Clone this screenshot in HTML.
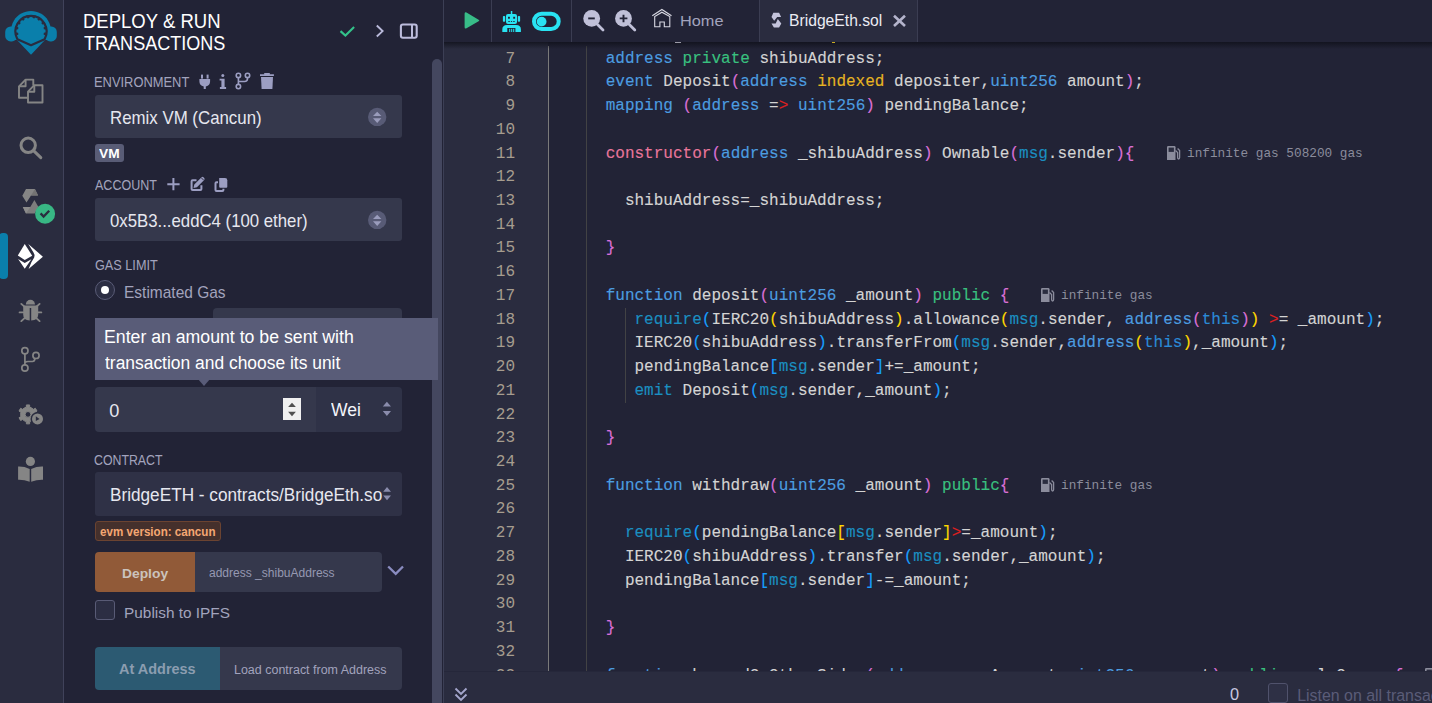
<!DOCTYPE html>
<html><head><meta charset="utf-8">
<style>
*{box-sizing:border-box;margin:0;padding:0}
html,body{width:1432px;height:703px;overflow:hidden;background:#222336;font-family:"Liberation Sans",sans-serif}
.a{position:absolute}
#icons{left:0;top:0;width:64px;height:703px;background:#2a2c3f;border-right:1px solid #40425a}
#side{left:64px;top:0;width:380px;height:703px;background:#222336;border-right:1px solid #3c3f55}
.lbl{position:absolute;left:95px;font-size:12.8px;color:#a2a3bd;white-space:nowrap;line-height:15px}
.sel{position:absolute;left:95px;width:307px;height:43px;background:#35384c;border-radius:3px;color:#dfe0ea;font-size:16.8px;white-space:nowrap;overflow:hidden}
.sel span{position:absolute;left:16px;top:12px;line-height:19px}
.udc{position:absolute;width:19px;height:19px;border-radius:50%;background:#575a73}
#toolbar{left:444px;top:0;width:988px;height:42px;background:#222336;}
#gutter{left:444px;top:42px;width:104px;height:629px;background:#2a2c3f}
.ln{position:absolute;width:71px;text-align:right;font-family:"Liberation Mono",monospace;font-size:16px;color:#a69d8f;white-space:pre;line-height:23.73px;height:23.73px}
.cl{position:absolute;font-family:"Liberation Mono",monospace;font-size:16.03px;color:#d4d4d4;white-space:pre;-webkit-text-stroke:0.12px currentColor;line-height:23.73px;height:23.73px}
.k{color:#4c9de0}.th{color:#2b8ad6}.g{color:#39c07f}.y{color:#e6b422}.p{color:#e9769b}.t{color:#1b8fc1}
.b1{color:#da70d6}.b2{color:#ffd700}.b3{color:#179fff}.r{color:#e02020}
.gas{position:absolute;font-family:"Liberation Mono",monospace;font-size:12.74px;color:#8b8c9c;white-space:pre;line-height:16px}
#term{left:444px;top:671px;width:988px;height:32px;background:#2a2c3f;border-top:1px solid #25273a}
.guide{position:absolute;width:1px}
.sep{position:absolute;top:0;width:1px;height:42px;background:#3b3d52}

</style></head><body>
<div id="icons" class="a"></div>
<!-- left icon bar -->
<svg class="a" style="left:0;top:0" width="63" height="60" viewBox="0 0 63 60">
 <g fill="#0a7fab">
  <path d="M13.1 40A20 20 0 1 1 48.9 40Z"/>
  <rect x="5.2" y="26.4" width="12" height="15" rx="5.5"/>
  <rect x="44.8" y="26.4" width="12" height="15" rx="5.5"/>
  <path d="M17 40H45L31 54.8Z"/>
 </g>
 <path d="M17.4 39.2A15.6 15.6 0 1 1 44.6 39.2L31 45.2Z" fill="none" stroke="#2a2c3f" stroke-width="2.2" stroke-linejoin="round"/>
 <path d="M32.33 14.96L35.91 15.67L34.40 18.45L32.66 18.11ZM38.37 16.69L41.40 18.71L38.94 20.71L37.47 19.72ZM43.29 20.60L45.31 23.63L42.28 24.53L41.29 23.06ZM46.33 26.09L47.04 29.67L43.89 29.34L43.55 27.60ZM47.04 32.33L46.33 35.91L43.55 34.40L43.89 32.66ZM15.67 35.91L14.96 32.33L18.11 32.66L18.45 34.40ZM14.96 29.67L15.67 26.09L18.45 27.60L18.11 29.34ZM16.69 23.63L18.71 20.60L20.71 23.06L19.72 24.53ZM20.60 18.71L23.63 16.69L24.53 19.72L23.06 20.71ZM26.09 15.67L29.67 14.96L29.34 18.11L27.60 18.45Z" fill="#2a2c3f"/>
</svg>
<svg class="a" style="left:14px;top:74px" width="34" height="34" viewBox="0 0 34 34">
 <g fill="none" stroke="#858585" stroke-width="1.9" stroke-linejoin="round">
  <path d="M13.5 23.7H5V12.3L11.6 5.6H19.3V11.5"/><path d="M11.6 5.6V12.3H5"/>
  <path d="M14 17.7L20.3 11.2H28.5V28.5H14Z"/><path d="M20.3 11.2V17.7H14"/>
 </g>
</svg>
<svg class="a" style="left:14px;top:131px" width="34" height="32" viewBox="0 0 34 32">
 <g fill="none" stroke="#858585" stroke-width="3" stroke-linecap="round">
  <circle cx="14.2" cy="14.3" r="7.2"/><path d="M19.8 19.8L26.8 26.6"/>
 </g>
</svg>
<svg class="a" style="left:14px;top:183px" width="44" height="44" viewBox="14 183 44 44">
 <path d="M26 189.1L34.9 189.1L38.1 195.6L31 195.6L26.5 202.6L22.3 195.8Z" fill="#858585"/>
 <path d="M34.9 189.1L38.1 195.6L31 195.6Z" fill="#737373"/>
 <path d="M34.4 200L38.3 206.7L34.7 213.5L26 213.5L22.8 207L30.3 207Z" fill="#7d7d7d"/>
 <path d="M22.8 207L26 213.5L30.3 207Z" fill="#8c8c8c"/>
 <circle cx="45.1" cy="213.7" r="10" fill="#38b784"/>
 <path d="M40.6 213.4L43.6 216.6L49.2 210.8" fill="none" stroke="#2a2c3f" stroke-width="2.3"/>
</svg>
<div class="a" style="left:-1px;top:233px;width:9px;height:46px;background:#0a7fab;border-radius:4px"></div>
<svg class="a" style="left:14px;top:240px" width="34" height="34" viewBox="0 0 34 34">
 <path d="M10.75 3.9L18.2 15.7L10.75 20L3.8 15.4Z" fill="#fff"/>
 <path d="M4.1 19L10.75 23.1L17.4 19.2L10.75 28.7Z" fill="#fff"/>
 <path d="M14.3 4.1L28.9 16.7L14.6 29L17.5 22L20.2 17.5L20.6 15L19.5 12.5Z" fill="#fff"/>
</svg>
<svg class="a" style="left:14px;top:294px" width="34" height="34" viewBox="0 0 34 34">
 <g fill="#858585">
  <path d="M11.8 10.4A4.6 4.6 0 0 1 21 10.4Z"/>
  <path d="M9.2 11.6H24.2V20.5Q24.2 26.4 17.2 26.4H15.7Q9.2 26.4 9.2 20.5Z"/>
 </g>
 <path d="M16.45 14V27" stroke="#2a2c3f" stroke-width="1.5"/>
 <g stroke="#858585" stroke-width="1.9" stroke-linecap="round">
  <path d="M7.3 9.9L10.4 12.6M5.6 18.4H9.2M7.3 27.1L10.9 23.9M25.6 9.9L22.5 12.6M27.3 18.4H23.7M25.6 27.1L22 23.9"/>
 </g>
</svg>
<svg class="a" style="left:14px;top:340px" width="34" height="34" viewBox="0 0 34 34">
 <g fill="none" stroke="#858585" stroke-width="1.7">
  <circle cx="10.9" cy="10.7" r="3.1"/><circle cx="22" cy="15.4" r="3.1"/><circle cx="10.9" cy="28" r="3.1"/>
  <path d="M10.9 13.8V24.9M11 22.6Q12 21.5 14 21.5H18.5Q20.6 21.5 21 18.4"/>
 </g>
</svg>
<svg class="a" style="left:14px;top:396px" width="34" height="34" viewBox="0 0 34 34">
 <path fill="#858585" fill-rule="evenodd" stroke="#858585" stroke-width="1" stroke-linejoin="round" d="M10.30 11.99 L12.31 11.20 L12.40 8.93 L15.60 8.93 L15.69 11.20 L17.70 11.99 L19.39 13.33 L21.40 12.28 L23.00 15.05 L21.08 16.26 L21.40 18.40 L21.08 20.54 L23.00 21.75 L21.40 24.52 L19.39 23.47 L17.70 24.81 L15.69 25.60 L15.60 27.87 L12.40 27.87 L12.31 25.60 L10.30 24.81 L8.61 23.47 L6.60 24.52 L5.00 21.75 L6.92 20.54 L6.60 18.40 L6.92 16.26 L5.00 15.05 L6.60 12.28 L8.61 13.33Z M14 15.5A2.9 2.9 0 1 0 14 21.3A2.9 2.9 0 1 0 14 15.5Z"/>
 <circle cx="23.5" cy="22.9" r="7" fill="#2a2c3f"/>
 <circle cx="23.5" cy="22.9" r="5.5" fill="#858585"/>
 <path d="M21.8 20.2V24.9L25.6 22.9Z" fill="#2a2c3f"/>
</svg>
<svg class="a" style="left:14px;top:452px" width="34" height="34" viewBox="0 0 34 34">
 <g fill="#858585">
  <circle cx="16.4" cy="9.4" r="4.6"/>
  <path d="M4.1 14.5Q10 14.2 15.7 16.9V29.7Q10 27.6 4.1 27.8Z"/>
  <path d="M29 14.5Q23 14.2 17.2 16.9V29.7Q23 27.6 29 27.8Z"/>
 </g>
</svg>

<div id="side" class="a"></div>
<div id="toolbar" class="a">
  <div class="sep" style="left:47px"></div>
  <div class="sep" style="left:127px"></div>
</div>
<div id="gutter" class="a"></div>
<div class="guide" style="left:548px;top:46px;height:625px;background:#7a7a7a"></div>
<div class="guide" style="left:586px;top:46px;height:625px;background:#424244"></div>
<div class="guide" style="left:625px;top:308px;height:95px;background:#424244"></div>
<div class="a" style="left:444px;top:42px;width:988px;height:629px;overflow:hidden">
<div class="ln" style="left:0px;top:-18.15px">6</div>
<div class="ln" style="left:0px;top:5.58px">7</div>
<div class="cl" style="left:104px;top:5.58px">      <span class="k">address</span> <span class="g">private</span> shibuAddress;</div>
<div class="ln" style="left:0px;top:29.31px">8</div>
<div class="cl" style="left:104px;top:29.31px">      <span class="k">event</span> Deposit<span class="b1">(</span><span class="k">address</span> <span class="y">indexed</span> depositer,<span class="k">uint256</span> amount<span class="b1">)</span>;</div>
<div class="ln" style="left:0px;top:53.04px">9</div>
<div class="cl" style="left:104px;top:53.04px">      <span class="k">mapping</span> <span class="b1">(</span><span class="k">address</span> =<span class="r">&gt;</span> <span class="k">uint256</span><span class="b1">)</span> pendingBalance;</div>
<div class="ln" style="left:0px;top:76.77px">10</div>
<div class="ln" style="left:0px;top:100.50px">11</div>
<div class="cl" style="left:104px;top:100.50px">      <span class="p">constructor</span><span class="b1">(</span><span class="k">address</span> _shibuAddress<span class="b1">)</span> Ownable<span class="b1">(</span><span class="t">msg</span>.sender<span class="b1">)</span><span class="b1">{</span></div>
<svg class="a" style="left:722px;top:102.50109375px" width="15" height="16" viewBox="0 0 15 16"><path d="M1 2.2Q1 1 2.2 1H8.3Q9.5 1 9.5 2.2V15H1Z" fill="#8b8c9c"/><rect x="2.6" y="2.6" width="5.3" height="4.3" fill="#2b2d40"/><path d="M9.5 5.5L11.6 7.6V12.6Q11.6 14 12.6 14Q13.6 14 13.6 12.6V5.5L11.6 3.5" fill="none" stroke="#8b8c9c" stroke-width="1.3"/></svg>
<div class="gas" style="left:743px;top:104.00px">infinite gas 508200 gas</div>
<div class="ln" style="left:0px;top:124.23px">12</div>
<div class="ln" style="left:0px;top:147.96px">13</div>
<div class="cl" style="left:104px;top:147.96px">        shibuAddress=_shibuAddress;</div>
<div class="ln" style="left:0px;top:171.69px">14</div>
<div class="ln" style="left:0px;top:195.42px">15</div>
<div class="cl" style="left:104px;top:195.42px">      <span class="b1">}</span></div>
<div class="ln" style="left:0px;top:219.15px">16</div>
<div class="ln" style="left:0px;top:242.88px">17</div>
<div class="cl" style="left:104px;top:242.88px">      <span class="k">function</span> deposit<span class="b1">(</span><span class="k">uint256</span> _amount<span class="b1">)</span> <span class="g">public</span> <span class="b1">{</span></div>
<svg class="a" style="left:596px;top:244.88109375px" width="15" height="16" viewBox="0 0 15 16"><path d="M1 2.2Q1 1 2.2 1H8.3Q9.5 1 9.5 2.2V15H1Z" fill="#8b8c9c"/><rect x="2.6" y="2.6" width="5.3" height="4.3" fill="#2b2d40"/><path d="M9.5 5.5L11.6 7.6V12.6Q11.6 14 12.6 14Q13.6 14 13.6 12.6V5.5L11.6 3.5" fill="none" stroke="#8b8c9c" stroke-width="1.3"/></svg>
<div class="gas" style="left:617px;top:246.38px">infinite gas</div>
<div class="ln" style="left:0px;top:266.61px">18</div>
<div class="cl" style="left:104px;top:266.61px">         <span class="t">require</span><span class="b3">(</span>IERC20<span class="b2">(</span>shibuAddress<span class="b2">)</span>.allowance<span class="b2">(</span><span class="t">msg</span>.sender, <span class="k">address</span><span class="b1">(</span><span class="th">this</span><span class="b1">)</span><span class="b2">)</span> <span class="r">&gt;</span>= _amount<span class="b3">)</span>;</div>
<div class="ln" style="left:0px;top:290.34px">19</div>
<div class="cl" style="left:104px;top:290.34px">         IERC20<span class="b3">(</span>shibuAddress<span class="b3">)</span>.transferFrom<span class="b3">(</span><span class="t">msg</span>.sender,<span class="k">address</span><span class="b2">(</span><span class="th">this</span><span class="b2">)</span>,_amount<span class="b3">)</span>;</div>
<div class="ln" style="left:0px;top:314.07px">20</div>
<div class="cl" style="left:104px;top:314.07px">         pendingBalance<span class="b3">[</span><span class="t">msg</span>.sender<span class="b3">]</span>+=_amount;</div>
<div class="ln" style="left:0px;top:337.80px">21</div>
<div class="cl" style="left:104px;top:337.80px">         <span class="t">emit</span> Deposit<span class="b3">(</span><span class="t">msg</span>.sender,_amount<span class="b3">)</span>;</div>
<div class="ln" style="left:0px;top:361.53px">22</div>
<div class="ln" style="left:0px;top:385.26px">23</div>
<div class="cl" style="left:104px;top:385.26px">      <span class="b1">}</span></div>
<div class="ln" style="left:0px;top:408.99px">24</div>
<div class="ln" style="left:0px;top:432.72px">25</div>
<div class="cl" style="left:104px;top:432.72px">      <span class="k">function</span> withdraw<span class="b1">(</span><span class="k">uint256</span> _amount<span class="b1">)</span> <span class="g">public</span><span class="b1">{</span></div>
<svg class="a" style="left:596px;top:434.72109374999997px" width="15" height="16" viewBox="0 0 15 16"><path d="M1 2.2Q1 1 2.2 1H8.3Q9.5 1 9.5 2.2V15H1Z" fill="#8b8c9c"/><rect x="2.6" y="2.6" width="5.3" height="4.3" fill="#2b2d40"/><path d="M9.5 5.5L11.6 7.6V12.6Q11.6 14 12.6 14Q13.6 14 13.6 12.6V5.5L11.6 3.5" fill="none" stroke="#8b8c9c" stroke-width="1.3"/></svg>
<div class="gas" style="left:617px;top:436.22px">infinite gas</div>
<div class="ln" style="left:0px;top:456.45px">26</div>
<div class="ln" style="left:0px;top:480.18px">27</div>
<div class="cl" style="left:104px;top:480.18px">        <span class="t">require</span><span class="b3">(</span>pendingBalance<span class="b2">[</span><span class="t">msg</span>.sender<span class="b2">]</span><span class="r">&gt;</span>=_amount<span class="b3">)</span>;</div>
<div class="ln" style="left:0px;top:503.91px">28</div>
<div class="cl" style="left:104px;top:503.91px">        IERC20<span class="b3">(</span>shibuAddress<span class="b3">)</span>.transfer<span class="b3">(</span><span class="t">msg</span>.sender,_amount<span class="b3">)</span>;</div>
<div class="ln" style="left:0px;top:527.64px">29</div>
<div class="cl" style="left:104px;top:527.64px">        pendingBalance<span class="b3">[</span><span class="t">msg</span>.sender<span class="b3">]</span>-=_amount;</div>
<div class="ln" style="left:0px;top:551.37px">30</div>
<div class="ln" style="left:0px;top:575.10px">31</div>
<div class="cl" style="left:104px;top:575.10px">      <span class="b1">}</span></div>
<div class="ln" style="left:0px;top:598.83px">32</div>
<div class="ln" style="left:0px;top:622.56px">33</div>
<div class="cl" style="left:104px;top:622.56px">      <span class="k">function</span> burned2_OtherSides<span class="b1">(</span><span class="k">address</span> _newAccount,<span class="k">uint256</span> _amount<span class="b1">)</span> <span class="g">public</span> onlyOwner <span class="b1">{</span></div>
<svg class="a" style="left:980px;top:624.56109375px" width="15" height="16" viewBox="0 0 15 16"><path d="M1 2.2Q1 1 2.2 1H8.3Q9.5 1 9.5 2.2V15H1Z" fill="#8b8c9c"/><rect x="2.6" y="2.6" width="5.3" height="4.3" fill="#2b2d40"/><path d="M9.5 5.5L11.6 7.6V12.6Q11.6 14 12.6 14Q13.6 14 13.6 12.6V5.5L11.6 3.5" fill="none" stroke="#8b8c9c" stroke-width="1.3"/></svg>
<div class="gas" style="left:1001px;top:626.06px">infinite gas</div>
</div>
<div class="a" style="left:444px;top:42px;width:988px;height:7px;background:linear-gradient(rgba(14,15,24,0.75),rgba(14,15,24,0))"></div>
<div class="a" style="left:675px;top:42px;width:6px;height:1px;background:#9a9aa6"></div>
<div class="a" style="left:832px;top:42px;width:3px;height:1px;background:#c8a820"></div>
<div id="term" class="a"></div>

<!-- side panel -->
<div class="a" style="left:432px;top:59px;width:10px;height:660px;background:#44475f;border-radius:5px 5px 0 0"></div>
<svg class="a" style="left:330px;top:15px" width="100" height="35" viewBox="330 15 100 35">
 <path d="M340.5 31.1L345.4 35.5L354.1 26.9" fill="none" stroke="#33c28a" stroke-width="2.1"/>
 <path d="M376.8 25.5L382.6 31.1L376.8 36.5" fill="none" stroke="#b9b9da" stroke-width="1.9"/>
 <rect x="400.9" y="24.5" width="15.8" height="13.2" rx="2" fill="none" stroke="#bcbcdc" stroke-width="2.1"/>
 <path d="M412 24.5V37.7" stroke="#bcbcdc" stroke-width="2"/>
</svg>
<svg class="a" style="left:190px;top:70px" width="90" height="25" viewBox="190 70 90 25">
 <g fill="#9c9ec2">
  <rect x="201" y="74.6" width="2" height="4"/><rect x="206.6" y="74.6" width="2" height="4"/>
  <path d="M199.4 79H210.1V81.2Q210.1 85.5 205.8 86.4V89H203.7V86.4Q199.4 85.5 199.4 81.2Z"/>
  <circle cx="222.8" cy="75.4" r="1.5"/>
  <path d="M219.6 78.8H224.6V87H226.1V89H219.9V87H221.4V80.6H219.6Z"/>
  <path d="M260 74.3H264.2V73H269.8V74.3H273.9V76.1H260Z"/>
  <path d="M261 77H273L272.4 89H261.6Z"/>
 </g>
 <g fill="none" stroke="#9c9ec2" stroke-width="1.6">
  <circle cx="238.4" cy="75.4" r="2.2"/><circle cx="247.5" cy="75.4" r="2.2"/><circle cx="238.4" cy="86.6" r="2.2"/>
  <path d="M238.4 77.6V84.4M238.5 81.5H244.5Q247.5 81.5 247.5 78.5V77.6"/>
 </g>
</svg>
<div class="sel" style="top:95px"></div>
<svg class="a" style="left:366px;top:106px" width="22" height="22" viewBox="366 106 22 22">
 <circle cx="377.2" cy="116.9" r="9.2" fill="#585b76"/>
 <path d="M373 115.9H381.4L377.2 111.7Z M373 118.2H381.4L377.2 123Z" fill="#9a9cbc"/>
</svg>
<div class="a" style="left:95px;top:144px;width:29px;height:18px;background:#595c76;border-radius:3px"></div>
<svg class="a" style="left:160px;top:172px" width="75" height="25" viewBox="160 172 75 25">
 <path d="M167.3 184.3H179.6M173.4 178V190.3" stroke="#9c9ec2" stroke-width="2"/>
 <path d="M196.5 180.3H192.6Q191.6 180.3 191.6 181.3V189.1Q191.6 190.1 192.6 190.1H200.4Q201.4 190.1 201.4 189.1V185.3" fill="none" stroke="#9c9ec2" stroke-width="2"/>
 <path d="M193.5 187.9L194.3 184.6L201.6 177.3Q202.5 176.4 203.4 177.3L204.2 178.1Q205.1 179 204.2 179.9L196.9 187.2Z" fill="#9c9ec2"/>
 <path d="M201.2 177.7L203.8 180.3" stroke="#222336" stroke-width="0.9"/>
 <path d="M218 182.2H216.5Q215.5 182.2 215.5 183.2V189.9Q215.5 190.9 216.5 190.9H222.4Q223.4 190.9 223.4 189.9V188.7" fill="none" stroke="#9c9ec2" stroke-width="2"/>
 <path d="M219.2 178H225Q227.3 178 227.3 180.3V186.7Q227.3 187.7 226.3 187.7H220.2Q219.2 187.7 219.2 186.7Z" fill="#9c9ec2"/>
</svg>
<div class="sel" style="top:198px"></div>
<svg class="a" style="left:366px;top:209px" width="22" height="22" viewBox="366 106 22 22">
 <circle cx="377.2" cy="116.9" r="9.2" fill="#585b76"/>
 <path d="M373 115.9H381.4L377.2 111.7Z M373 118.2H381.4L377.2 123Z" fill="#9a9cbc"/>
</svg>
<div class="a" style="left:95px;top:280px;width:20px;height:20px;border-radius:50%;background:#2c2e43;border:1px solid #595b76"></div>
<div class="a" style="left:101px;top:286px;width:8px;height:8px;border-radius:50%;background:#fff"></div>
<div class="a" style="left:213px;top:308px;width:189px;height:43px;background:#35384c;border-radius:4px"></div>
<div class="a" style="left:95px;top:387px;width:221px;height:45px;background:#35384c;border-radius:4px 0 0 4px"></div>
<svg class="a" style="left:283px;top:398px" width="18" height="22" viewBox="283 398 18 22">
 <rect x="283" y="398" width="18.2" height="22.2" fill="#f0f0f0"/>
 <path d="M288.1 407H295.9L292 402.7Z M288.1 411.8H295.9L292 416.2Z" fill="#505050"/>
</svg>
<div class="a" style="left:316px;top:387px;width:86px;height:45px;background:#2f3247;border-radius:0 4px 4px 0"></div>
<svg class="a" style="left:380px;top:400px" width="14" height="18" viewBox="380 400 14 18">
 <path d="M382.8 406.6H391L386.9 401.8Z M382.8 411H391L386.9 416Z" fill="#8a8cac"/>
</svg>
<div class="a" style="left:95px;top:318px;width:343px;height:62px;background:#595c78"></div>
<div class="a" style="left:198px;top:379px;width:0;height:0;border-left:6px solid transparent;border-right:6px solid transparent;border-top:7px solid #595c78"></div>
<div class="sel" style="top:472px;height:44px;background:#2f3146"></div>
<svg class="a" style="left:380px;top:484px" width="14" height="18" viewBox="380 484 14 18">
 <path d="M383.2 491.7H391L387 487Z M383.2 495.6H391L387 500.3Z" fill="#8a8cac"/>
</svg>
<div class="a" style="left:95px;top:521px;width:126px;height:20px;background:#45302c;border:1px solid #6b4331;border-radius:3px"></div>
<div class="a" style="left:95px;top:552px;width:100px;height:40px;background:#915a38;border-radius:4px 0 0 4px"></div>
<div class="a" style="left:195px;top:552px;width:187px;height:40px;background:#35384c;border-radius:0 4px 4px 0"></div>
<svg class="a" style="left:385px;top:562px" width="22" height="16" viewBox="385 562 22 16">
 <path d="M388.2 566.5L395.7 573.9L403 566.5" fill="none" stroke="#8a8cc0" stroke-width="2.3"/>
</svg>
<div class="a" style="left:95px;top:600px;width:20px;height:20px;border-radius:3px;background:#2c2e43;border:1px solid #595b76"></div>
<div class="a" style="left:95px;top:647px;width:125px;height:43px;background:#2c5a72;border-radius:4px 0 0 4px"></div>
<div class="a" style="left:220px;top:647px;width:182px;height:43px;background:#35384c;border-radius:0 4px 4px 0"></div>

<!-- toolbar -->
<svg class="a" style="left:444px;top:0" width="300" height="42" viewBox="444 0 300 42">
 <path d="M466.5 12.6Q464.6 11.4 464.6 13.8V27Q464.6 29.4 466.5 28.2L478.6 21.3Q480.1 20.5 478.6 19.7Z" fill="#38bc88"/>
 <g fill="#29e3f2">
  <rect x="510.8" y="11" width="1.5" height="3.5"/>
  <rect x="506" y="13.9" width="11" height="10" rx="2"/>
  <rect x="502.9" y="16" width="2.3" height="5.8" rx="0.8"/>
  <rect x="517.8" y="16" width="2.3" height="5.8" rx="0.8"/>
  <path d="M502.3 32V29.5Q502.3 24.9 507 24.9H516.2Q520.9 24.9 520.9 29.5V32Z"/>
 </g>
 <g fill="#222336">
  <rect x="508" y="16.8" width="1.9" height="1.9"/><rect x="513.2" y="16.8" width="1.9" height="1.9"/>
  <rect x="508.3" y="21" width="1.5" height="0.9"/><rect x="510.9" y="21" width="1.2" height="0.9"/><rect x="513.2" y="21" width="1.5" height="0.9"/>
  <path d="M507.3 28H515.4V32H507.3Z"/>
 </g>
 <rect x="509.2" y="28.8" width="1" height="3.2" fill="#29e3f2"/><rect x="511.2" y="28.8" width="1" height="3.2" fill="#29e3f2"/><rect x="513.2" y="28.8" width="1" height="3.2" fill="#29e3f2"/>
 <rect x="534" y="13.8" width="24.7" height="15.2" rx="7.6" fill="none" stroke="#29e3f2" stroke-width="4"/>
 <circle cx="541.6" cy="21.6" r="4.9" fill="#29e3f2"/>
 <circle cx="591.7" cy="18.4" r="8.4" fill="#c0c0d8"/>
 <path d="M588.2 18.4H594.8" stroke="#222336" stroke-width="1.9"/>
 <path d="M597.5 24.5L603 30" stroke="#c0c0d8" stroke-width="2.8" stroke-linecap="round"/>
 <circle cx="623.5" cy="18.4" r="8.4" fill="#c0c0d8"/>
 <path d="M619.7 18.4H627.4M623.5 14.7V22.3" stroke="#222336" stroke-width="1.9"/>
 <path d="M629.3 24.5L634.8 30" stroke="#c0c0d8" stroke-width="2.8" stroke-linecap="round"/>
 <g fill="none" stroke="#d8d8e2" stroke-width="1.1" stroke-linejoin="miter">
  <path d="M652.3 15.8L661.9 9.5L671.5 15.8"/>
  <path d="M654.7 26.8V16.6L661.9 12.2L669.8 16.6V26.8H664.3V22H659.9V26.8Z"/>
 </g>
</svg>
<div class="a" style="left:759px;top:0;width:159px;height:42px;background:#2a2c3f;border-left:1px solid #3b3d52;border-right:1px solid #3b3d52"></div>
<svg class="a" style="left:765px;top:8px" width="35" height="26" viewBox="765 8 35 26">
 <path d="M773.3 12.8H779.1L781.1 16.9H777.2L774.2 20.8L771.5 16.9Z" fill="#c4c4dc"/>
 <path d="M777.8 19.1L781.3 23.4L779.1 27.6H773.9L771.5 23.4H775.7Z" fill="#c4c4dc"/>
</svg>
<svg class="a" style="left:888px;top:10px" width="24" height="22" viewBox="888 10 24 22">
 <path d="M894 15.7L905 26M905 15.7L894 26" stroke="#b4b4cc" stroke-width="2.6"/>
</svg>
<svg class="a" style="left:450px;top:682px" width="24" height="21" viewBox="450 682 24 21">
 <path d="M455.5 688.5L461 694L466.5 688.5M455.5 694.5L461 700L466.5 694.5" fill="none" stroke="#a4a6cc" stroke-width="1.9"/>
</svg>
<div class="a" style="left:1268px;top:683px;width:20px;height:20px;border-radius:3px;background:#2e3045;border:1px solid #50526c"></div>

<div class="a" style="left:83.22px;top:10px;font-size:19.55px;line-height:22px;color:#ffffff;font-weight:normal;white-space:nowrap;transform:scaleX(0.9480);transform-origin:0 0;">DEPLOY &amp; RUN</div>
<div class="a" style="left:84.34px;top:32px;font-size:19.55px;line-height:22px;color:#ffffff;font-weight:normal;white-space:nowrap;transform:scaleX(0.9240);transform-origin:0 0;">TRANSACTIONS</div>
<div class="a" style="left:94.17px;top:74px;font-size:13.83px;line-height:16px;color:#a2a3bd;font-weight:normal;white-space:nowrap;transform:scaleX(0.9328);transform-origin:0 0;">ENVIRONMENT</div>
<div class="a" style="left:110.05px;top:108px;font-size:18.16px;line-height:20px;color:#e6e7ef;font-weight:normal;white-space:nowrap;transform:scaleX(0.9278);transform-origin:0 0;">Remix VM (Cancun)</div>
<div class="a" style="left:95.00px;top:177px;font-size:14.25px;line-height:16px;color:#a2a3bd;font-weight:normal;white-space:nowrap;transform:scaleX(0.8783);transform-origin:0 0;">ACCOUNT</div>
<div class="a" style="left:110.30px;top:211px;font-size:18.16px;line-height:20px;color:#e6e7ef;font-weight:normal;white-space:nowrap;transform:scaleX(0.9234);transform-origin:0 0;">0x5B3...eddC4 (100 ether)</div>
<div class="a" style="left:94.57px;top:257px;font-size:13.97px;line-height:16px;color:#a2a3bd;font-weight:normal;white-space:nowrap;transform:scaleX(0.9078);transform-origin:0 0;">GAS LIMIT</div>
<div class="a" style="left:123.76px;top:283px;font-size:16.20px;line-height:18px;color:#a2a3bd;font-weight:normal;white-space:nowrap;transform:scaleX(0.9572);transform-origin:0 0;">Estimated Gas</div>
<div class="a" style="left:104.18px;top:327px;font-size:17.60px;line-height:20px;color:#ffffff;font-weight:normal;white-space:nowrap;transform:scaleX(1.0054);transform-origin:0 0;">Enter an amount to be sent with</div>
<div class="a" style="left:105.43px;top:353px;font-size:17.60px;line-height:20px;color:#ffffff;font-weight:normal;white-space:nowrap;transform:scaleX(0.9900);transform-origin:0 0;">transaction and choose its unit</div>
<div class="a" style="left:109.16px;top:401px;font-size:18.16px;line-height:20px;color:#e6e7ef;font-weight:normal;white-space:nowrap;">0</div>
<div class="a" style="left:330.80px;top:400px;font-size:17.60px;line-height:20px;color:#f4f4fa;font-weight:normal;white-space:nowrap;transform:scaleX(0.9967);transform-origin:0 0;">Wei</div>
<div class="a" style="left:94.38px;top:452px;font-size:13.97px;line-height:16px;color:#a2a3bd;font-weight:normal;white-space:nowrap;transform:scaleX(0.8825);transform-origin:0 0;">CONTRACT</div>
<div class="a" style="left:109.82px;top:485px;font-size:17.60px;line-height:20px;color:#e6e7ef;font-weight:normal;white-space:nowrap;transform:scaleX(0.9769);transform-origin:0 0;">BridgeETH - contracts/BridgeEth.so</div>
<div class="a" style="left:100.25px;top:524px;font-size:12.85px;line-height:15px;color:#f4a773;font-weight:bold;white-space:nowrap;transform:scaleX(0.9040);transform-origin:0 0;">evm version: cancun</div>
<div class="a" style="left:121.77px;top:566px;font-size:13.41px;line-height:15px;color:#cbc3bd;font-weight:bold;white-space:nowrap;transform:scaleX(1.0307);transform-origin:0 0;">Deploy</div>
<div class="a" style="left:209.32px;top:565px;font-size:12.85px;line-height:15px;color:#9698b2;font-weight:normal;white-space:nowrap;transform:scaleX(0.9357);transform-origin:0 0;">address _shibuAddress</div>
<div class="a" style="left:124.07px;top:604px;font-size:15.36px;line-height:17px;color:#a2a3bd;font-weight:normal;white-space:nowrap;">Publish to IPFS</div>
<div class="a" style="left:118.61px;top:660px;font-size:15.36px;line-height:17px;color:#8b9db0;font-weight:bold;white-space:nowrap;transform:scaleX(0.9421);transform-origin:0 0;">At Address</div>
<div class="a" style="left:234.10px;top:662px;font-size:12.85px;line-height:15px;color:#a2a3bd;font-weight:normal;white-space:nowrap;transform:scaleX(0.9711);transform-origin:0 0;">Load contract from Address</div>
<div class="a" style="left:679.70px;top:12px;font-size:15.36px;line-height:17px;color:#a2a3bd;font-weight:normal;white-space:nowrap;transform:scaleX(1.0613);transform-origin:0 0;">Home</div>
<div class="a" style="left:789.04px;top:11px;font-size:16.06px;line-height:18px;color:#ebebf3;font-weight:normal;white-space:nowrap;transform:scaleX(0.9770);transform-origin:0 0;">BridgeEth.sol</div>
<div class="a" style="left:1229.51px;top:686px;font-size:15.64px;line-height:17px;color:#c8c8e0;font-weight:normal;white-space:nowrap;transform:scaleX(1.0437);transform-origin:0 0;">0</div>
<div class="a" style="left:1297.23px;top:687px;font-size:15.92px;line-height:17px;color:#5a5c78;font-weight:normal;white-space:nowrap;">Listen on all transactions</div>
<div class="a" style="left:99.10px;top:146px;font-size:12.99px;line-height:15px;color:#ffffff;font-weight:bold;white-space:nowrap;transform:scaleX(1.0555);transform-origin:0 0;">VM</div>

</body></html>
